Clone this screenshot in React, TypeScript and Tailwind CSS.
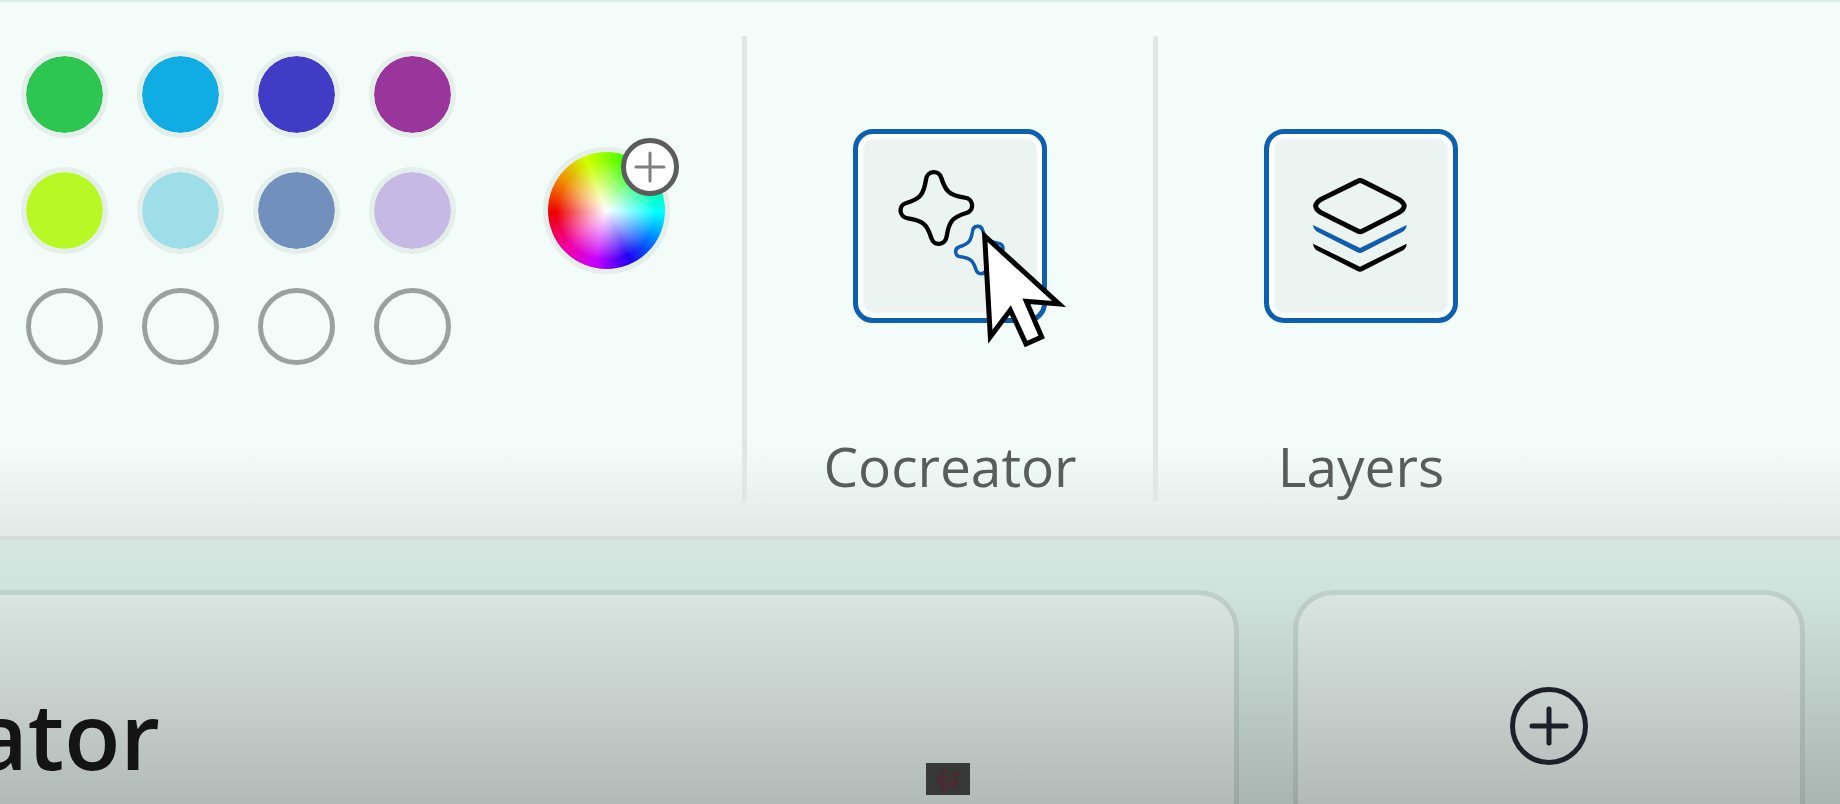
import React from "react"

const swatches = [
    { name: "Green", style: "bg-[#2dc651]" },
    { name: "Turquoise", style: "bg-[#0fade3]" },
    { name: "Indigo", style: "bg-[#403cc6]" },
    { name: "Purple", style: "bg-[#9a359c]" },
    { name: "Lime", style: "bg-[#b8f824]" },
    { name: "Pale turquoise", style: "bg-[#9edee8]" },
    { name: "Blue gray", style: "bg-[#7190bb]" },
    { name: "Lavender", style: "bg-[#c6b9e4]" },
]

const emptySlots = [1, 2, 3, 4]

const STAR =
    "M-31-85C-28-113 8-115 15-90C28-48 40-38 85-31C113-28 115 8 90 15C48 28 38 40 31 85C28 113-8 115-15 90C-28 48-40 38-85 31C-113 28-115-8-90-15C-48-28-38-40-31-85Z"

const Palette = () => (
    <div className="grid grid-cols-4 gap-[29px]">
        {swatches.map((swatch) => (
            <button
                key={swatch.name}
                aria-label={swatch.name}
                className={`size-[87px] rounded-full border-5 border-[#e4eeeb] bg-clip-padding ${swatch.style}`}
            />
        ))}
        {emptySlots.map((slot) => (
            <button
                key={slot}
                aria-label={`Empty color ${slot}`}
                className="m-[5px] size-[77px] rounded-full border-5 border-[#9ba19f]"
            />
        ))}
    </div>
)

const ColorWheel = () => (
    <button aria-label="Edit colors" className="relative size-[127px] rounded-full border-5 border-[#e4eeeb]">
        <span className="block size-full rounded-full bg-[radial-gradient(circle_closest-side,#fff_0%,#ffffff99_35%,#ffffff00_85%),conic-gradient(#8cff00_0deg,#1eff00_28deg,#00ff90_62deg,#00ffff_92deg,#0080ff_122deg,#2000f0_155deg,#c800ff_192deg,#f000a0_228deg,#f00000_268deg,#f09000_305deg,#d0ff00_338deg,#8cff00_360deg)]" />
        <span className="absolute -top-[14px] left-[73px] flex size-[58px] items-center justify-center rounded-full border-5 border-[#5c5c5c] bg-white">
            <svg viewBox="0 0 32 32" className="size-8" fill="none" stroke="#7f7f7f" strokeWidth="3" strokeLinecap="round">
                <path d="M16 2v28M2 16h28" />
            </svg>
        </span>
    </button>
)

const CocreatorIcon = () => (
    <svg viewBox="84 72 552 552" className="size-full" fill="none">
        <path d={STAR} transform="translate(319 294)" stroke="#000" strokeWidth="13" />
        <path d={STAR} transform="translate(448 420) scale(.66)" stroke="#0f5cb0" strokeWidth="16" />
    </svg>
)

const LayersIcon = () => (
    <svg viewBox="60 69 552 552" className="size-full">
        <path
            d="M326 211Q333 206 341 211L449 265Q482 285 449 305L341 360Q333 364 326 360L216 305Q184 285 216 265Z"
            fill="none"
            stroke="#000"
            strokeWidth="15"
        />
        <path d="M192 342L333 411L473 342Q472 358 458 364L341 424Q333 428 325 424L207 364Q194 358 192 342Z" fill="#0f5cb0" />
        <path d="M192 398L333 467L473 398Q472 414 458 420L341 480Q333 484 325 480L207 420Q194 414 192 398Z" fill="#000" />
    </svg>
)

const Cursor = () => (
    <svg viewBox="459 354 255 360" className="pointer-events-none absolute top-[99px] left-[129px] h-[120px] w-[85px]">
        <path
            d="M467 378L690 582L592 574L638 681L591 702L544 600L484 680Z"
            fill="#fff"
            stroke="#000"
            strokeWidth="15"
            strokeMiterlimit="10"
        />
    </svg>
)

const Tool = ({ label, children, pointer }: { label: string; children: React.ReactNode; pointer?: React.ReactNode }) => (
    <div className="flex w-[411px] flex-col items-center justify-between border-l-5 border-[#dfe8e5] pt-[93px]">
        <div className="relative">
            <button
                aria-labelledby={label}
                className="block size-[194px] rounded-[20px] border-5 border-[#0d60b0] bg-[#ecf4f2] shadow-[inset_0_0_2px_5px_#fff]"
            >
                {children}
            </button>
            {pointer}
        </div>
        <span id={label} className="text-[55px] leading-[70px] text-[#585d5b]">
            {label}
        </span>
    </div>
)

const Toolbar = () => (
    <header className="flex border-t-2 border-b-4 border-t-[#dbebe5] border-b-[#d5dcda] bg-linear-to-b from-[#f3fcf9] from-83% to-[#e3e9e7] pt-[34px] pb-[35px]">
        <div className="flex min-h-[465px] items-start pt-[15px] pr-[72px] pl-[21px]">
            <div className="flex items-center gap-[87px]">
                <Palette />
                <ColorWheel />
            </div>
        </div>
        <Tool label="Cocreator" pointer={<Cursor />}>
            <CocreatorIcon />
        </Tool>
        <Tool label="Layers">
            <LayersIcon />
        </Tool>
    </header>
)

const App = () => {
    return (
        <div className="relative flex min-h-screen flex-col overflow-hidden bg-[#f3fcf9] font-['Open_Sans','Noto_Sans',sans-serif]">
            <Toolbar />
            <main className="flex flex-1 gap-[54px] bg-linear-to-b from-[#d6e7e1] via-[#cfe2db] via-20% to-[#a9b6b1] pt-[50px] pr-[35px]">
                <section className="flex-1 overflow-hidden rounded-tr-[40px] border-t-5 border-r-5 border-black/8 bg-linear-to-b from-[#dae5e1] to-[#b2bab7] bg-clip-padding pt-[72px]">
                    <h1 className="flex w-40 justify-end overflow-hidden text-[92px] leading-[136px] font-semibold text-[#141414]">ator</h1>
                </section>
                <section className="flex w-[512px] justify-center rounded-t-[40px] border-x-5 border-t-5 border-black/8 bg-linear-to-b from-[#dae5e1] to-[#b2bab7] bg-clip-padding pt-[92px]">
                    <button aria-label="Add" className="size-[78px]">
                        <svg viewBox="0 0 78 78" className="size-full" fill="none" stroke="#1b2029" strokeWidth="5" strokeLinecap="round">
                            <circle cx="39" cy="39" r="36.5" />
                            <path d="M39 22v34M22 39h34" />
                        </svg>
                    </button>
                </section>
            </main>
            <div className="absolute bottom-[9px] left-[926px] h-8 w-11 bg-[#363938]">
                <svg viewBox="0 0 132 96" className="size-full" fill="#4b2a33">
                    <path d="M46 21h20v10H54v22a11 11 0 1 1-8-11z" />
                    <path d="M84 27h20v10H92v28a11 11 0 1 1-8-11z" />
                    <path d="M59 38h18v10H66v28a11 11 0 1 1-7-11z" />
                </svg>
            </div>
        </div>
    )
}

export default App
